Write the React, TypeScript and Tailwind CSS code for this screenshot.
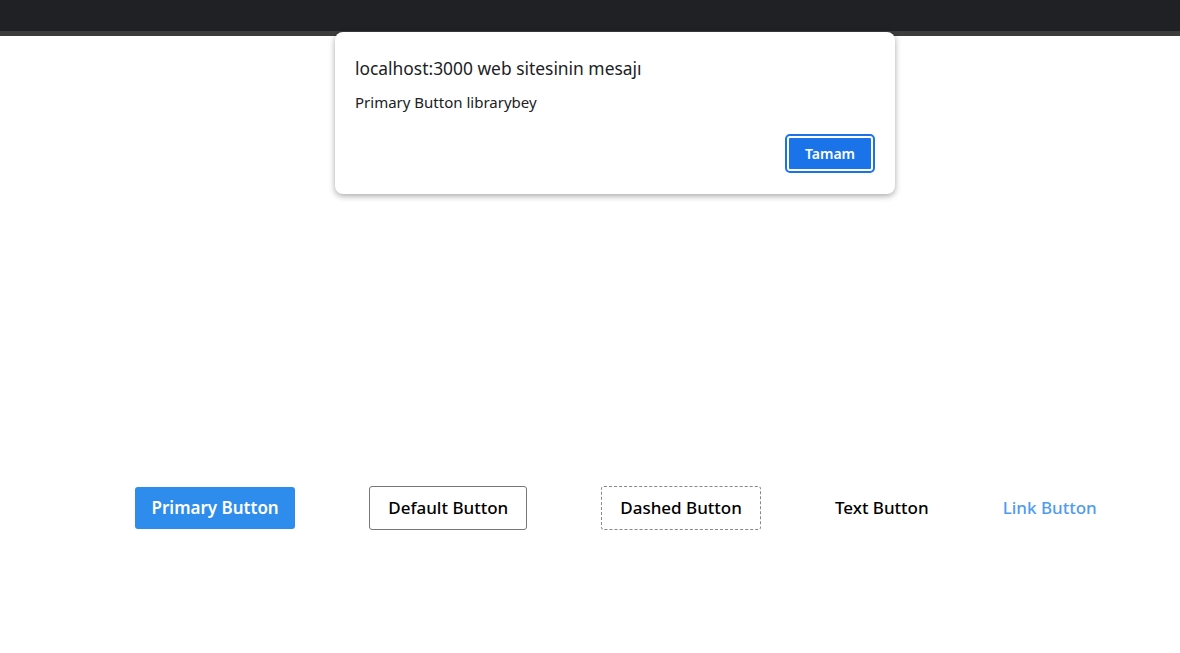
export default function App() {
  return (
    <div className="relative h-[653px] w-[1180px] overflow-hidden bg-white font-['Noto_Sans',sans-serif]">
      <div className="h-[31px] bg-[#202124]" />
      <div className="h-[5px] bg-[#3c3c3c]" />

      <div className="flex items-center gap-[74px] pl-[135px] pt-[450px]">
        <button type="button" className="h-[42px] rounded-[3px] bg-[#2e8cec] px-[16.5px] text-[17px] font-semibold text-white">
          Primary Button
        </button>
        <button type="button" className="h-[44px] rounded-[3px] border border-[#777] px-[18px] text-[17px] font-medium text-black">
          Default Button
        </button>
        <button type="button" className="h-[44px] rounded-[3px] border border-dashed border-[#888] px-[18px] text-[17px] font-medium text-black">
          Dashed Button
        </button>
        <button type="button" className="h-[44px] text-[17px] font-medium text-black">
          Text Button
        </button>
        <button type="button" className="h-[44px] text-[17px] font-medium text-[#4f9bef]">
          Link Button
        </button>
      </div>

      <div className="absolute left-[335px] top-[32px] w-[560px] rounded-[8px] bg-white px-[20px] pb-[21px] pt-[24px] shadow-[0_2px_6px_rgba(0,0,0,0.35)]">
        <p className="m-0 text-[17.4px] leading-[24px] text-[#202124]">localhost:3000 web sitesinin mesajı</p>
        <p className="mt-[12px] text-[15px] leading-[20px] text-[#202124]">Primary Button librarybey</p>
        <div className="mt-[22px] flex justify-end">
          <button type="button" className="h-[39px] w-[90px] rounded-[5px] border-2 border-[#1a73e8] bg-[#1a73e8] text-[14px] font-semibold text-white outline outline-2 -outline-offset-4 outline-white">
            Tamam
          </button>
        </div>
      </div>
    </div>
  );
}
